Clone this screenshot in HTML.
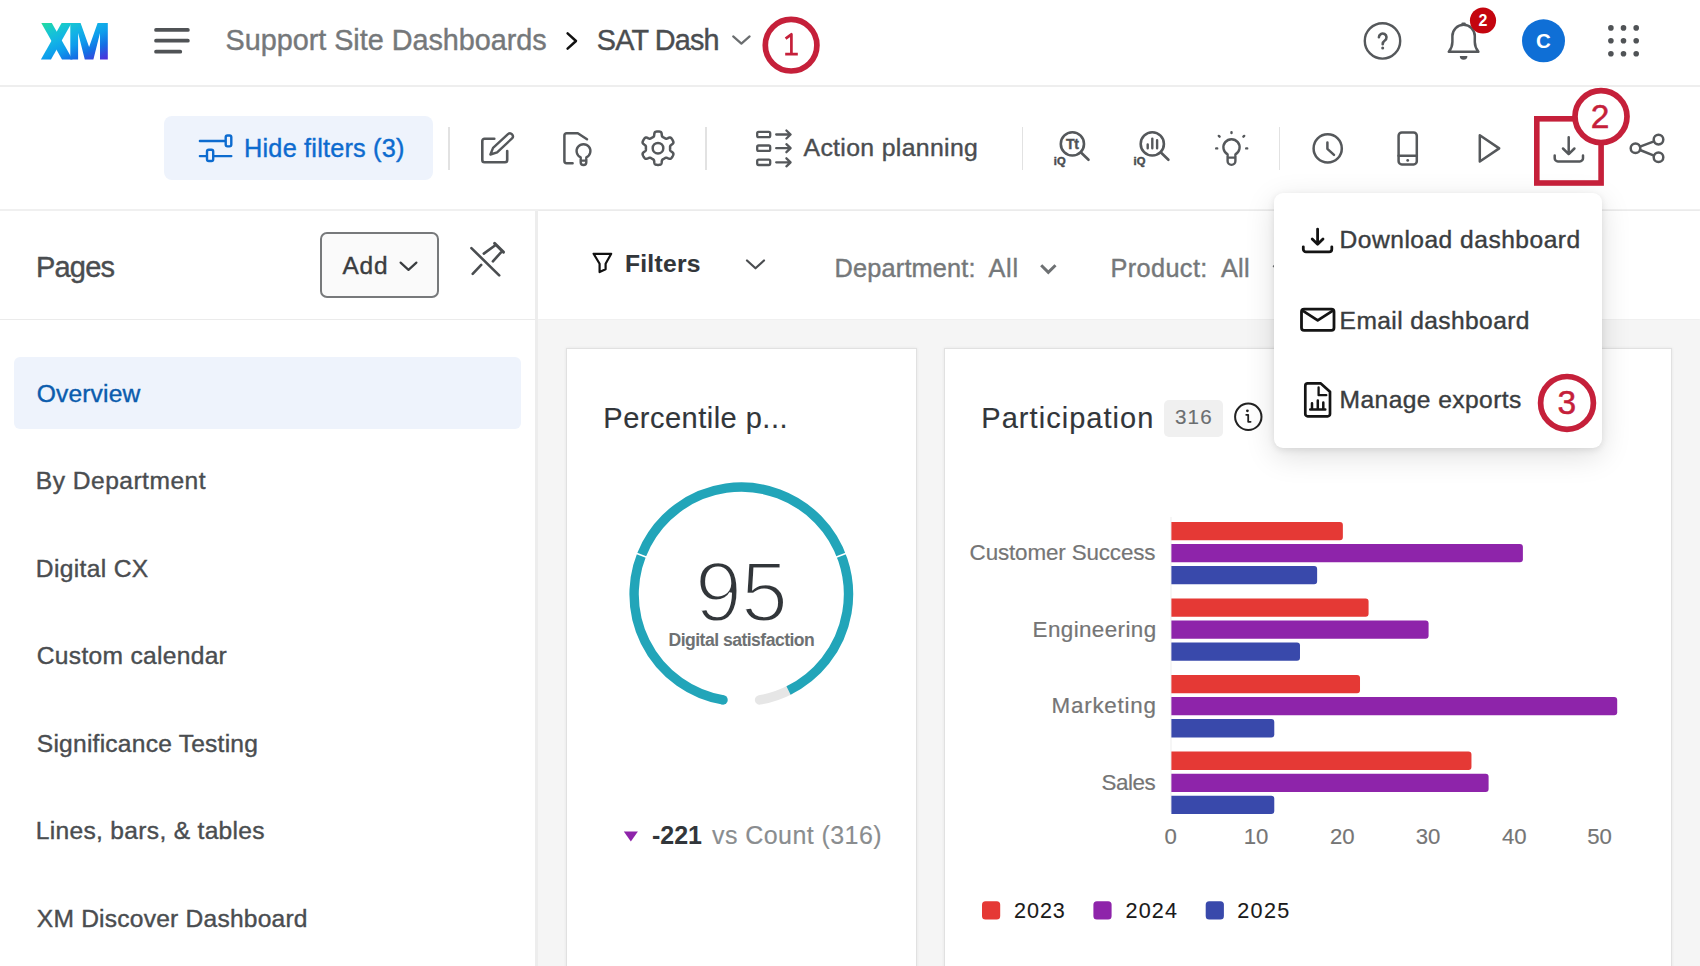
<!DOCTYPE html>
<html>
<head>
<meta charset="utf-8">
<title>SAT Dash</title>
<style>
*{box-sizing:border-box;margin:0;padding:0}
html,body{width:1700px;height:966px;overflow:hidden;background:#fff}
body{font-family:"Liberation Sans",sans-serif;color:#4a4d50;position:relative}
.abs{position:absolute}
.t{position:absolute;white-space:pre;line-height:1;-webkit-text-stroke:0.4px}
svg.L{position:absolute;left:0;top:0;width:1700px;height:966px;overflow:visible}
svg text{font-family:"Liberation Sans",sans-serif}
.ic{fill:none;stroke:#55585b;stroke-width:2.5;stroke-linecap:round;stroke-linejoin:round}
.bk{fill:none;stroke:#141414;stroke-width:2.5;stroke-linecap:round;stroke-linejoin:round}
.rd{fill:none;stroke:#c5203a}
</style>
</head>
<body>
<!-- base surfaces -->
<div class="abs" style="left:0;top:85px;width:1700px;height:2.4px;background:#eee"></div>
<div class="abs" style="left:0;top:209px;width:1700px;height:2.4px;background:#f0f0f0"></div>
<div class="abs" style="left:538px;top:211px;width:1162px;height:755px;background:#f5f5f5"></div>
<div class="abs" style="left:538px;top:211px;width:1162px;height:108px;background:#fff;box-shadow:0 0 1.5px rgba(0,0,0,.08)"></div>
<div class="abs" style="left:535px;top:211px;width:3px;height:755px;background:#ededed"></div>
<div class="abs" style="left:0;top:319px;width:535px;height:1px;background:#ebebeb"></div>
<!-- toolbar pieces -->
<div class="abs" style="left:164px;top:116px;width:268.5px;height:64px;background:#eef3fc;border-radius:8px"></div>
<div class="abs" style="left:448.4px;top:126.5px;width:1.6px;height:43.5px;background:#e2e2e2"></div>
<div class="abs" style="left:705.1px;top:126.5px;width:1.6px;height:43.5px;background:#e2e2e2"></div>
<div class="abs" style="left:1021.8px;top:126.5px;width:1.6px;height:43.5px;background:#e2e2e2"></div>
<div class="abs" style="left:1278.7px;top:126.5px;width:1.6px;height:43.5px;background:#e2e2e2"></div>
<!-- sidebar pieces -->
<div class="abs" style="left:320.2px;top:231.9px;width:118.4px;height:65.7px;border:2px solid #77797b;border-radius:7px;background:#fafafa"></div>
<div class="abs" style="left:14px;top:357px;width:507px;height:72px;background:#eef3fc;border-radius:6px"></div>
<!-- cards -->
<div class="abs" style="left:566px;top:348px;width:351px;height:640px;background:#fff;border:1px solid #e1e1e1;box-shadow:0 0 3px rgba(0,0,0,.07)"></div>
<div class="abs" style="left:944px;top:348px;width:727.5px;height:640px;background:#fff;border:1px solid #e1e1e1;box-shadow:0 0 3px rgba(0,0,0,.07)"></div>
<div class="abs" style="left:1163.8px;top:400px;width:59.2px;height:36.7px;background:#f0f0f0;border-radius:5px"></div>

<svg class="L" viewBox="0 0 1700 966">
<defs>
<linearGradient id="xm" gradientUnits="userSpaceOnUse" x1="41" y1="23" x2="66.1" y2="78.7">
<stop offset="0" stop-color="#24dc9c"/><stop offset="0.2" stop-color="#17c6d2"/><stop offset="0.38" stop-color="#12b2e6"/><stop offset="0.55" stop-color="#0e9dec"/><stop offset="0.75" stop-color="#146ee4"/><stop offset="1" stop-color="#5528da"/>
</linearGradient>
</defs>
<!-- XM logo -->
<g fill="url(#xm)">
<polygon points="41.3,22.9 51.8,22.9 72.6,59.6 62.0,59.6"/>
<polygon points="61.6,22.9 71.6,22.9 51.0,59.6 40.9,59.6"/>
<polygon points="70.3,59.6 70.3,22.9 80.6,22.9 89.1,47 97.6,22.9 107.8,22.9 107.8,59.6 100,59.6 100,33 93.4,59.6 84.8,59.6 78.1,33 78.1,59.6"/>
</g>
<!-- hamburger -->
<g stroke="#505356" stroke-width="3.7" stroke-linecap="round"><path d="M156,29.9H187.9M156,40.7H187.9M156,51.7H180.3"/></g>
<!-- breadcrumb chevrons -->
<path d="M567.6,33.3 L576,41 L567.6,48.7" fill="none" stroke="#111" stroke-width="2.5" stroke-linecap="round" stroke-linejoin="round"/>
<path d="M733.2,36.4 L741.4,43.6 L749.6,36.4" fill="none" stroke="#6b6e70" stroke-width="2.2" stroke-linecap="round" stroke-linejoin="round"/>
<!-- help -->
<circle cx="1382.5" cy="40.9" r="17.7" class="ic" style="stroke-width:2.4"/>
<path d="M1378.9,37.3 a3.8,3.8 0 1 1 5.9,3.2 c-1.5,1 -2.1,1.8 -2.1,3.7" class="ic" style="stroke-width:2.6"/>
<circle cx="1382.7" cy="48" r="1.5" fill="#55585b"/>
<!-- bell -->
<path d="M1448.8,51.8 C1450.5,49.6 1452.4,46.6 1452.4,42 V36 A11.2,11.2 0 0 1 1474.8,36 V42 C1474.8,46.6 1476.7,49.6 1478.4,51.8 Z" class="ic"/>
<rect x="1461.4" y="22.6" width="4.4" height="2.6" rx="1.2" fill="#55585b"/>
<path d="M1459.8,55.9 h7.6 a3.8,3.8 0 0 1 -7.6,0 z" fill="#55585b"/>
<circle cx="1483" cy="20.5" r="13.1" fill="#c4050f"/>
<!-- avatar -->
<circle cx="1543.5" cy="40.8" r="21.5" fill="#0f6fd6"/>
<!-- grid -->
<g fill="#505356">
<circle cx="1610.9" cy="27.9" r="2.8"/><circle cx="1623.5" cy="27.9" r="2.8"/><circle cx="1636.2" cy="27.9" r="2.8"/>
<circle cx="1610.9" cy="40.8" r="2.8"/><circle cx="1623.5" cy="40.8" r="2.8"/><circle cx="1636.2" cy="40.8" r="2.8"/>
<circle cx="1610.9" cy="53.8" r="2.8"/><circle cx="1623.5" cy="53.8" r="2.8"/><circle cx="1636.2" cy="53.8" r="2.8"/>
</g>
<!-- hide filters icon -->
<g fill="none" stroke="#0d6bcf" stroke-width="2.4" stroke-linecap="round" stroke-linejoin="round">
<path d="M199.9,141 H224.5 M199.9,156.1 H205.8 M214.4,156.1 H231.3"/>
<rect x="225.7" y="135.5" width="5.6" height="10.9" rx="1.8"/>
<rect x="207" y="149.8" width="6.2" height="11.2" rx="1.8"/>
</g>
<!-- edit -->
<path d="M494.3,138.8 H484.5 a2.2,2.2 0 0 0 -2.2,2.2 V160 a2.2,2.2 0 0 0 2.2,2.2 H505 a2.2,2.2 0 0 0 2.2,-2.2 V151" class="ic" style="stroke-width:2.6"/>
<path d="M490.4,154.5 L493.06,147.91 L507.96,134.11 A3,3 0 0 1 512.04,138.49 L497.14,152.29 Z" class="ic" style="stroke-width:2.4"/>
<!-- doc bulb -->
<path d="M572.6,163.3 H566.6 a2.2,2.2 0 0 1 -2.2,-2.2 V135.4 a2.2,2.2 0 0 1 2.2,-2.2 H577.8 L587,139.3" class="ic"/>
<path d="M580.7,157.4 A6.9,6.9 0 1 1 586.3,157.4 V162.2 a2.8,2.8 0 0 1 -5.6,0 Z M580.7,160.6 H586.3" class="ic" style="stroke-width:2.4"/>
<!-- gear -->
<path d="M658.00,131.50 L658.29,131.50 L658.58,131.51 L658.87,131.53 L659.16,131.56 L659.45,131.59 L659.74,131.63 L660.03,131.69 L660.31,131.77 L660.58,131.89 L660.85,132.05 L661.10,132.27 L661.32,132.60 L661.50,133.05 L661.63,133.63 L661.73,134.29 L661.80,134.95 L661.87,135.53 L661.97,135.98 L662.09,136.31 L662.24,136.55 L662.40,136.73 L662.58,136.88 L662.76,137.00 L662.94,137.11 L663.12,137.21 L663.31,137.31 L663.50,137.41 L663.68,137.51 L663.87,137.62 L664.05,137.72 L664.23,137.83 L664.41,137.94 L664.59,138.05 L664.77,138.16 L664.95,138.27 L665.14,138.38 L665.32,138.48 L665.52,138.58 L665.73,138.65 L665.97,138.70 L666.25,138.71 L666.60,138.65 L667.04,138.51 L667.57,138.29 L668.18,138.02 L668.80,137.77 L669.37,137.60 L669.85,137.53 L670.25,137.56 L670.57,137.66 L670.84,137.81 L671.07,137.99 L671.28,138.19 L671.48,138.41 L671.66,138.64 L671.83,138.87 L672.00,139.11 L672.16,139.35 L672.31,139.60 L672.46,139.85 L672.61,140.10 L672.74,140.36 L672.87,140.62 L673.00,140.89 L673.11,141.15 L673.22,141.42 L673.31,141.70 L673.38,141.99 L673.42,142.28 L673.41,142.59 L673.34,142.92 L673.17,143.27 L672.87,143.65 L672.44,144.06 L671.91,144.47 L671.37,144.87 L670.91,145.22 L670.57,145.53 L670.34,145.80 L670.21,146.05 L670.13,146.28 L670.09,146.50 L670.08,146.72 L670.08,146.93 L670.08,147.14 L670.08,147.35 L670.09,147.57 L670.10,147.78 L670.10,147.99 L670.10,148.20 L670.10,148.41 L670.10,148.62 L670.09,148.83 L670.08,149.05 L670.08,149.26 L670.08,149.47 L670.08,149.68 L670.09,149.90 L670.13,150.12 L670.21,150.35 L670.34,150.60 L670.57,150.87 L670.91,151.18 L671.37,151.53 L671.91,151.93 L672.44,152.34 L672.87,152.75 L673.17,153.13 L673.34,153.48 L673.41,153.81 L673.42,154.12 L673.38,154.41 L673.31,154.70 L673.22,154.98 L673.11,155.25 L673.00,155.51 L672.87,155.78 L672.74,156.04 L672.61,156.30 L672.46,156.55 L672.31,156.80 L672.16,157.05 L672.00,157.29 L671.83,157.53 L671.66,157.76 L671.48,157.99 L671.28,158.21 L671.07,158.41 L670.84,158.59 L670.57,158.74 L670.25,158.84 L669.85,158.87 L669.37,158.80 L668.80,158.63 L668.18,158.38 L667.57,158.11 L667.04,157.89 L666.60,157.75 L666.25,157.69 L665.97,157.70 L665.73,157.75 L665.52,157.82 L665.32,157.92 L665.14,158.02 L664.95,158.13 L664.77,158.24 L664.59,158.35 L664.41,158.46 L664.23,158.57 L664.05,158.68 L663.87,158.78 L663.68,158.89 L663.50,158.99 L663.31,159.09 L663.12,159.19 L662.94,159.29 L662.76,159.40 L662.58,159.52 L662.40,159.67 L662.24,159.85 L662.09,160.09 L661.97,160.42 L661.87,160.87 L661.80,161.45 L661.73,162.11 L661.63,162.77 L661.50,163.35 L661.32,163.80 L661.10,164.13 L660.85,164.35 L660.58,164.51 L660.31,164.63 L660.03,164.71 L659.74,164.77 L659.45,164.81 L659.16,164.84 L658.87,164.87 L658.58,164.89 L658.29,164.90 L658.00,164.90 L657.71,164.90 L657.42,164.89 L657.13,164.87 L656.84,164.84 L656.55,164.81 L656.26,164.77 L655.97,164.71 L655.69,164.63 L655.42,164.51 L655.15,164.35 L654.90,164.13 L654.68,163.80 L654.50,163.35 L654.37,162.77 L654.27,162.11 L654.20,161.45 L654.13,160.87 L654.03,160.42 L653.91,160.09 L653.76,159.85 L653.60,159.67 L653.42,159.52 L653.24,159.40 L653.06,159.29 L652.88,159.19 L652.69,159.09 L652.50,158.99 L652.32,158.89 L652.13,158.78 L651.95,158.68 L651.77,158.57 L651.59,158.46 L651.41,158.35 L651.23,158.24 L651.05,158.13 L650.86,158.02 L650.68,157.92 L650.48,157.82 L650.27,157.75 L650.03,157.70 L649.75,157.69 L649.40,157.75 L648.96,157.89 L648.43,158.11 L647.82,158.38 L647.20,158.63 L646.63,158.80 L646.15,158.87 L645.75,158.84 L645.43,158.74 L645.16,158.59 L644.93,158.41 L644.72,158.21 L644.52,157.99 L644.34,157.76 L644.17,157.53 L644.00,157.29 L643.84,157.05 L643.69,156.80 L643.54,156.55 L643.39,156.30 L643.26,156.04 L643.13,155.78 L643.00,155.51 L642.89,155.25 L642.78,154.98 L642.69,154.70 L642.62,154.41 L642.58,154.12 L642.59,153.81 L642.66,153.48 L642.83,153.13 L643.13,152.75 L643.56,152.34 L644.09,151.93 L644.63,151.53 L645.09,151.18 L645.43,150.87 L645.66,150.60 L645.79,150.35 L645.87,150.12 L645.91,149.90 L645.92,149.68 L645.92,149.47 L645.92,149.26 L645.92,149.05 L645.91,148.83 L645.90,148.62 L645.90,148.41 L645.90,148.20 L645.90,147.99 L645.90,147.78 L645.91,147.57 L645.92,147.35 L645.92,147.14 L645.92,146.93 L645.92,146.72 L645.91,146.50 L645.87,146.28 L645.79,146.05 L645.66,145.80 L645.43,145.53 L645.09,145.22 L644.63,144.87 L644.09,144.47 L643.56,144.06 L643.13,143.65 L642.83,143.27 L642.66,142.92 L642.59,142.59 L642.58,142.28 L642.62,141.99 L642.69,141.70 L642.78,141.42 L642.89,141.15 L643.00,140.89 L643.13,140.62 L643.26,140.36 L643.39,140.10 L643.54,139.85 L643.69,139.60 L643.84,139.35 L644.00,139.11 L644.17,138.87 L644.34,138.64 L644.52,138.41 L644.72,138.19 L644.93,137.99 L645.16,137.81 L645.43,137.66 L645.75,137.56 L646.15,137.53 L646.63,137.60 L647.20,137.77 L647.82,138.02 L648.43,138.29 L648.96,138.51 L649.40,138.65 L649.75,138.71 L650.03,138.70 L650.27,138.65 L650.48,138.58 L650.68,138.48 L650.86,138.38 L651.05,138.27 L651.23,138.16 L651.41,138.05 L651.59,137.94 L651.77,137.83 L651.95,137.72 L652.13,137.62 L652.32,137.51 L652.50,137.41 L652.69,137.31 L652.88,137.21 L653.06,137.11 L653.24,137.00 L653.42,136.88 L653.60,136.73 L653.76,136.55 L653.91,136.31 L654.03,135.98 L654.13,135.53 L654.20,134.95 L654.27,134.29 L654.37,133.63 L654.50,133.05 L654.68,132.60 L654.90,132.27 L655.15,132.05 L655.42,131.89 L655.69,131.77 L655.97,131.69 L656.26,131.63 L656.55,131.59 L656.84,131.56 L657.13,131.53 L657.42,131.51 L657.71,131.50 L658.00,131.50Z" class="ic"/>
<circle cx="658" cy="148.2" r="5.3" class="ic"/>
<!-- action planning -->
<g class="ic" style="stroke-width:2.3">
<rect x="757.2" y="131.8" width="13" height="5.4" rx="1.4"/><path d="M776.2,134.5 H790.4 M786.4,130.5 L790.6,134.5 L786.4,138.5"/>
<rect x="757.2" y="145.5" width="13" height="5.4" rx="1.4"/><path d="M776.2,148.2 H790.4 M786.4,144.2 L790.6,148.2 L786.4,152.2"/>
<rect x="757.2" y="159.6" width="13" height="5.4" rx="1.4"/><path d="M776.2,162.3 H790.4 M786.4,158.3 L790.6,162.3 L786.4,166.3"/>
</g>
<!-- iQ text -->
<circle cx="1072.4" cy="143.9" r="11.6" class="ic" style="stroke-width:2.6"/>
<path d="M1081,152.5 L1088.5,159.8" class="ic" style="stroke-width:2.6"/>
<text x="1072.2" y="148.7" font-size="14" font-weight="bold" fill="#4f5255" stroke="#4f5255" stroke-width="0.4" text-anchor="middle" letter-spacing="-0.3">Tt</text>
<text x="1053.8" y="164.7" font-size="11.2" font-weight="bold" fill="#4a4d50" stroke="#4a4d50" stroke-width="0.45">iQ</text>
<!-- iQ bars -->
<circle cx="1152.3" cy="143.9" r="11.6" class="ic" style="stroke-width:2.6"/>
<path d="M1160.9,152.5 L1168.4,159.8" class="ic" style="stroke-width:2.6"/>
<path d="M1147.7,144.4 V148.2 M1152.3,138.6 V148.2 M1157.1,140.2 V148.2" class="ic" style="stroke-width:2.4"/>
<text x="1133.6" y="164.7" font-size="11.2" font-weight="bold" fill="#4a4d50" stroke="#4a4d50" stroke-width="0.45">iQ</text>
<!-- bulb -->
<path d="M1227.6,157.6 V154.4 A8.1,8.1 0 1 1 1235.4,154.4 V157.6 Z M1227.6,157.6 V161 a3.9,3.9 0 0 0 7.8,0 V157.6" class="ic" style="stroke-width:2.4"/>
<path d="M1231.5,132.1 V133.1 M1218.8,135.9 L1219.6,136.7 M1244.2,135.9 L1243.4,136.7 M1216.2,148.4 H1217.2 M1246.2,148.4 H1247.2" class="ic" style="stroke-width:2.4"/>
<!-- clock -->
<circle cx="1327.7" cy="148.4" r="14.1" class="ic"/>
<path d="M1327.4,142.4 V148.8 L1334,154.8" class="ic"/>
<!-- phone -->
<rect x="1398.6" y="132.5" width="18.2" height="31.9" rx="3.2" class="ic"/>
<path d="M1398.6,155.7 H1416.8" class="ic"/>
<circle cx="1407.7" cy="160.4" r="1.4" fill="#55585b"/>
<!-- play -->
<path d="M1479.8,135.3 L1499.2,148.4 L1479.8,161.5 Z" class="ic"/>
<!-- download -->
<path d="M1568.7,137.3 V154 M1563,148.5 L1568.7,154.2 L1574.4,148.5 M1554.7,155.6 V158.2 a3.2,3.2 0 0 0 3.2,3.2 H1579.8 a3.2,3.2 0 0 0 3.2,-3.2 V155.6" class="ic"/>
<!-- share -->
<circle cx="1635.5" cy="148.3" r="4.8" class="ic"/><circle cx="1658.5" cy="139.6" r="4.8" class="ic"/><circle cx="1658.5" cy="157.3" r="4.8" class="ic"/>
<path d="M1640,146.6 L1654,141.3 M1640,150 L1654,155.6" class="ic"/>
<!-- add chevron -->
<path d="M400.6,262.6 L408.5,269.9 L416.4,262.6" fill="none" stroke="#3a3d40" stroke-width="2.2" stroke-linecap="round" stroke-linejoin="round"/>
<!-- pin -->
<g fill="none" stroke="#4a4d50" stroke-width="2.6" stroke-linecap="round">
<path d="M471.4,248.1 L499.2,275.4"/>
<path d="M494.6,243.4 L503.5,252.1" stroke-width="3"/>
<path d="M483.8,253.6 L495.3,245.3 M492.9,261.4 L501,252.3 M481.2,264.9 L472.7,273.8"/>
</g>
<!-- funnel -->
<path d="M593.6,253.8 H611.2 L605.6,263.8 V269.3 L599.6,272 V263.8 Z" fill="none" stroke="#111" stroke-width="2.2" stroke-linejoin="round"/>
<path d="M747,260.5 L755.5,268.3 L764,260.5" fill="none" stroke="#4a4d50" stroke-width="2.2" stroke-linecap="round" stroke-linejoin="round"/>
<path d="M1041.2,265.2 L1048.3,272.4 L1055.5,265.2" fill="none" stroke="#6e7173" stroke-width="3"/>
<path d="M1273.6,265.2 L1280.7,272.4 L1287.9,265.2" fill="none" stroke="#6e7173" stroke-width="3"/>
<!-- gauge -->
<path d="M790.20,689.70 A107.2,107.2 0 0 1 759.55,699.94" fill="none" stroke="#e6e6e6" stroke-width="9.4" stroke-linecap="round"/>
<path d="M723.05,699.94 A107.2,107.2 0 1 1 788.53,690.54" fill="none" stroke="#22a5b9" stroke-width="9.4"/>
<circle cx="723.05" cy="699.94" r="4.7" fill="#22a5b9"/>
<path d="M647.98,557.81 L634.94,552.71 M834.62,557.81 L847.66,552.71" stroke="#fff" stroke-width="1.6"/>
<text x="741" y="621.4" font-size="84.4" fill="#32363a" stroke="#fff" stroke-width="2.8" text-anchor="middle" letter-spacing="-1">95</text>
<path d="M623.8,831.4 H637.9 L630.85,841.6 Z" fill="#8e24aa"/>
<!-- info -->
<circle cx="1248.3" cy="416.8" r="13.2" fill="none" stroke="#222" stroke-width="2"/>
<circle cx="1247.4" cy="410.8" r="1.4" fill="#222"/>
<path d="M1246.2,414.8 H1248.2 V421.8 H1250.6" fill="none" stroke="#222" stroke-width="1.8" stroke-linecap="round" stroke-linejoin="round"/>
<!-- chart -->
<path d="M1171,517 V812" stroke="#ededed" stroke-width="1"/>
<path d="M1171.4,521.90 h168.46 a3,3 0 0 1 3,3 v12.30 a3,3 0 0 1 -3,3 h-168.46 z" fill="#e53935"/>
<path d="M1171.4,543.95 h348.49 a3,3 0 0 1 3,3 v12.30 a3,3 0 0 1 -3,3 h-348.49 z" fill="#8e24aa"/>
<path d="M1171.4,566.00 h142.74 a3,3 0 0 1 3,3 v12.30 a3,3 0 0 1 -3,3 h-142.74 z" fill="#3949ab"/>
<path d="M1171.4,598.40 h194.18 a3,3 0 0 1 3,3 v12.30 a3,3 0 0 1 -3,3 h-194.18 z" fill="#e53935"/>
<path d="M1171.4,620.45 h254.19 a3,3 0 0 1 3,3 v12.30 a3,3 0 0 1 -3,3 h-254.19 z" fill="#8e24aa"/>
<path d="M1171.4,642.50 h125.59 a3,3 0 0 1 3,3 v12.30 a3,3 0 0 1 -3,3 h-125.59 z" fill="#3949ab"/>
<path d="M1171.4,675.00 h185.61 a3,3 0 0 1 3,3 v12.30 a3,3 0 0 1 -3,3 h-185.61 z" fill="#e53935"/>
<path d="M1171.4,697.05 h442.80 a3,3 0 0 1 3,3 v12.30 a3,3 0 0 1 -3,3 h-442.80 z" fill="#8e24aa"/>
<path d="M1171.4,719.10 h99.88 a3,3 0 0 1 3,3 v12.30 a3,3 0 0 1 -3,3 h-99.88 z" fill="#3949ab"/>
<path d="M1171.4,751.60 h297.06 a3,3 0 0 1 3,3 v12.30 a3,3 0 0 1 -3,3 h-297.06 z" fill="#e53935"/>
<path d="M1171.4,773.65 h314.20 a3,3 0 0 1 3,3 v12.30 a3,3 0 0 1 -3,3 h-314.20 z" fill="#8e24aa"/>
<path d="M1171.4,795.70 h99.88 a3,3 0 0 1 3,3 v12.30 a3,3 0 0 1 -3,3 h-99.88 z" fill="#3949ab"/>

<rect x="982" y="901.3" width="18.2" height="18.2" rx="3.5" fill="#e53935"/>
<rect x="1093.4" y="901.3" width="18.2" height="18.2" rx="3.5" fill="#8e24aa"/>
<rect x="1205.7" y="901.3" width="18.2" height="18.2" rx="3.5" fill="#3949ab"/>
</svg>
<div class="t" style="left:225.50px;top:26px;font-size:28.8px;letter-spacing:-0.023px;color:#75787a;font-weight:normal;">Support Site Dashboards</div><div class="t" style="left:596.80px;top:26px;font-size:28.8px;letter-spacing:-0.829px;color:#4a4d50;font-weight:normal;">SAT Dash</div><div class="t" style="left:244.10px;top:136px;font-size:25.3px;letter-spacing:0.193px;color:#0d6bcf;font-weight:normal;">Hide filters (3)</div><div class="t" style="left:803.50px;top:136px;font-size:24.8px;letter-spacing:0.343px;color:#4a4d50;font-weight:normal;">Action planning</div><div class="t" style="left:36.00px;top:253px;font-size:29px;letter-spacing:-0.8px;color:#4a4d50;font-weight:normal;">Pages</div><div class="t" style="left:342.40px;top:254px;font-size:24.4px;letter-spacing:0.85px;color:#3a3d40;font-weight:normal;">Add</div><div class="t" style="left:36.80px;top:382px;font-size:24.6px;letter-spacing:0.129px;color:#0b5cad;font-weight:normal;">Overview</div><div class="t" style="left:35.80px;top:469px;font-size:24.6px;letter-spacing:0.475px;color:#4a4d50;font-weight:normal;">By Department</div><div class="t" style="left:35.80px;top:557px;font-size:24.6px;letter-spacing:0.333px;color:#4a4d50;font-weight:normal;">Digital CX</div><div class="t" style="left:36.80px;top:644px;font-size:24.6px;letter-spacing:0.293px;color:#4a4d50;font-weight:normal;">Custom calendar</div><div class="t" style="left:36.80px;top:732px;font-size:24.6px;letter-spacing:0.221px;color:#4a4d50;font-weight:normal;">Significance Testing</div><div class="t" style="left:35.80px;top:819px;font-size:24.6px;letter-spacing:0.3px;color:#4a4d50;font-weight:normal;">Lines, bars, &amp; tables</div><div class="t" style="left:36.80px;top:907px;font-size:24.6px;letter-spacing:0.21px;color:#4a4d50;font-weight:normal;">XM Discover Dashboard</div><div class="t" style="left:624.90px;top:252px;font-size:24.6px;letter-spacing:0.3px;color:#32363a;font-weight:bold;-webkit-text-stroke:0.1px;">Filters</div><div class="t" style="left:834.60px;top:256px;font-size:25.3px;letter-spacing:0.18px;color:#75787a;font-weight:normal;">Department:</div><div class="t" style="left:988.60px;top:256px;font-size:25.3px;letter-spacing:0.65px;color:#75787a;font-weight:normal;">All</div><div class="t" style="left:1110.50px;top:256px;font-size:25.3px;letter-spacing:0.371px;color:#75787a;font-weight:normal;">Product:</div><div class="t" style="left:1220.90px;top:256px;font-size:25.3px;letter-spacing:0.3px;color:#75787a;font-weight:normal;">All</div><div class="t" style="left:603.30px;top:404px;font-size:29px;letter-spacing:0.493px;color:#32363a;font-weight:normal;-webkit-text-stroke:0.15px;">Percentile p...</div><div class="t" style="left:668.50px;top:632px;font-size:17.6px;letter-spacing:-0.532px;color:#6e7173;font-weight:bold;-webkit-text-stroke:0;">Digital satisfaction</div><div class="t" style="left:651.90px;top:823px;font-size:25px;letter-spacing:0.033px;color:#32363a;font-weight:bold;-webkit-text-stroke:0;">-221</div><div class="t" style="left:712.00px;top:823px;font-size:25px;letter-spacing:0.431px;color:#8a8d8f;font-weight:normal;-webkit-text-stroke:0.15px;">vs Count (316)</div><div class="t" style="left:981.30px;top:404px;font-size:29px;letter-spacing:1.042px;color:#32363a;font-weight:normal;-webkit-text-stroke:0.15px;">Participation</div><div class="t" style="left:1174.90px;top:407px;font-size:20.6px;letter-spacing:1.25px;color:#6b6e70;font-weight:normal;-webkit-text-stroke:0.15px;">316</div><div class="t" style="left:969.60px;top:542px;font-size:22.4px;letter-spacing:-0.133px;color:#757575;font-weight:normal;-webkit-text-stroke:0.2px;">Customer Success</div><div class="t" style="left:1032.60px;top:619px;font-size:22.4px;letter-spacing:0.4px;color:#757575;font-weight:normal;-webkit-text-stroke:0.2px;">Engineering</div><div class="t" style="left:1051.60px;top:695px;font-size:22.4px;letter-spacing:0.75px;color:#757575;font-weight:normal;-webkit-text-stroke:0.2px;">Marketing</div><div class="t" style="left:1101.60px;top:772px;font-size:22.4px;letter-spacing:-0.5px;color:#757575;font-weight:normal;-webkit-text-stroke:0.2px;">Sales</div><div class="t" style="left:1164.40px;top:826px;font-size:22.2px;letter-spacing:0px;color:#757575;font-weight:normal;-webkit-text-stroke:0.15px;">0</div><div class="t" style="left:1243.65px;top:826px;font-size:22.2px;letter-spacing:0px;color:#757575;font-weight:normal;-webkit-text-stroke:0.15px;">10</div><div class="t" style="left:1329.90px;top:826px;font-size:22.2px;letter-spacing:0px;color:#757575;font-weight:normal;-webkit-text-stroke:0.15px;">20</div><div class="t" style="left:1415.65px;top:826px;font-size:22.2px;letter-spacing:0px;color:#757575;font-weight:normal;-webkit-text-stroke:0.15px;">30</div><div class="t" style="left:1501.90px;top:826px;font-size:22.2px;letter-spacing:0px;color:#757575;font-weight:normal;-webkit-text-stroke:0.15px;">40</div><div class="t" style="left:1587.15px;top:826px;font-size:22.2px;letter-spacing:0px;color:#757575;font-weight:normal;-webkit-text-stroke:0.15px;">50</div><div class="t" style="left:1014.00px;top:900px;font-size:21.6px;letter-spacing:0.933px;color:#1a1a1a;font-weight:normal;-webkit-text-stroke:0.1px;">2023</div><div class="t" style="left:1125.50px;top:900px;font-size:21.6px;letter-spacing:1.167px;color:#1a1a1a;font-weight:normal;-webkit-text-stroke:0.1px;">2024</div><div class="t" style="left:1237.30px;top:900px;font-size:21.6px;letter-spacing:1.3px;color:#1a1a1a;font-weight:normal;-webkit-text-stroke:0.1px;">2025</div><div class="t" style="left:1478.50px;top:13px;font-size:16px;letter-spacing:0px;color:#fff;font-weight:bold;-webkit-text-stroke:0;">2</div><div class="t" style="left:1535.90px;top:31px;font-size:20.5px;letter-spacing:0px;color:#fff;font-weight:bold;-webkit-text-stroke:0;">C</div>

<!-- dropdown -->
<div class="abs" style="left:1274.2px;top:192.5px;width:327.8px;height:255.3px;background:#fff;border-radius:9px;box-shadow:0 8px 30px rgba(0,0,0,.13),0 2px 7px rgba(0,0,0,.09)"></div>
<svg class="L" viewBox="0 0 1700 966">
<path d="M1317.6,229.1 V244 M1312.2,238.9 L1317.6,244.3 L1323,238.9 M1303.3,246.8 V249.2 a2.7,2.7 0 0 0 2.7,2.7 H1329.1 a2.7,2.7 0 0 0 2.7,-2.7 V246.8" class="bk" style="stroke-width:2.8"/>
<rect x="1301.5" y="309.1" width="32.5" height="21.3" rx="2.6" class="bk" style="stroke-width:2.8"/>
<path d="M1302.6,310.6 L1317.7,320.4 L1332.9,310.6" class="bk" style="stroke-width:2.8"/>
<path d="M1305.3,385.8 a2.4,2.4 0 0 1 2.4,-2.4 H1320.8 L1330,391.7 V413.9 a2.4,2.4 0 0 1 -2.4,2.4 H1307.7 a2.4,2.4 0 0 1 -2.4,-2.4 Z" class="bk" style="stroke-width:2.7"/>
<path d="M1318.6,387.4 V395.2 H1326.3" class="bk" style="stroke-width:2.3"/>
<path d="M1310.2,409.6 H1325.3 M1312,409 V403.2 M1317.8,409 V400.6 M1323.3,409 V402.5" class="bk" style="stroke-width:2.5"/>
<!-- red annotations -->
<circle cx="791.1" cy="45.2" r="25.8" class="rd" stroke-width="5.7"/>
<path d="M785.6,38.7 L791.4,34.3 V54 M785.2,54.1 H797.8" class="rd" stroke-width="2.7" stroke-linejoin="round"/>
<rect x="1536.8" y="118.8" width="64.3" height="64.2" class="rd" stroke-width="5.6"/>
<circle cx="1601" cy="116.6" r="26" class="rd" stroke-width="5.7" style="fill:#fff"/>
<circle cx="1567" cy="402.9" r="26.4" class="rd" stroke-width="5.7"/>
</svg>
<div class="t" style="left:1339.60px;top:228px;font-size:24.6px;letter-spacing:0.476px;color:#3a3d40;font-weight:normal;">Download dashboard</div><div class="t" style="left:1339.60px;top:309px;font-size:24.6px;letter-spacing:0.379px;color:#3a3d40;font-weight:normal;">Email dashboard</div><div class="t" style="left:1339.60px;top:388px;font-size:24.6px;letter-spacing:0.415px;color:#3a3d40;font-weight:normal;">Manage exports</div><div class="t" style="left:1590.70px;top:100px;font-size:33.5px;letter-spacing:0px;color:#c5203a;font-weight:normal;-webkit-text-stroke:0.5px #c5203a;">2</div><div class="t" style="left:1557.50px;top:386px;font-size:33.5px;letter-spacing:0px;color:#c5203a;font-weight:normal;-webkit-text-stroke:0.5px #c5203a;">3</div>
</body>
</html>
